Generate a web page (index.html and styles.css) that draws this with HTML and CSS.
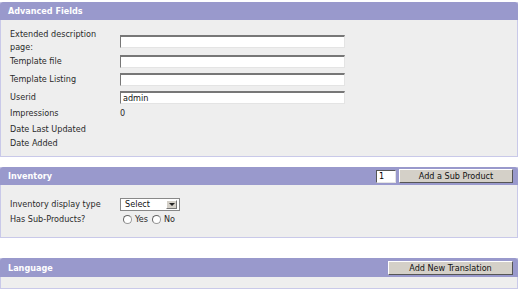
FILE: index.html
```html
<!DOCTYPE html>
<html lang="en">
<head>
    <meta charset="UTF-8">
    <title>Product Fields</title>
    <link rel="stylesheet" href="styles.css">
</head>
<body>
    <div class="panel adv">
        <div class="panel-head">Advanced Fields</div>
        <div class="panel-body">
            <div class="fields adv-rows">
                <div class="label">Extended description page:</div><div><input type="text" class="text"></div>
                <div class="label">Template file</div><div><input type="text" class="text"></div>
                <div class="label">Template Listing</div><div><input type="text" class="text"></div>
                <div class="label">Userid</div><div><input type="text" class="text" value="admin"></div>
                <div class="label">Impressions</div><div>0</div>
                <div class="label">Date Last Updated</div><div></div>
                <div class="label">Date Added</div><div></div>
            </div>
        </div>
    </div>

    <div class="panel inv">
        <div class="panel-head">
            <span>Inventory</span>
            <span class="head-tools">
                <input type="text" class="qty" value="1">
                <button class="btn sub">Add a Sub Product</button>
            </span>
        </div>
        <div class="panel-body">
            <div class="fields inv-rows">
                <div class="label">Inventory display type</div>
                <div><span class="select">Select<span class="arrow"></span></span></div>
                <div class="label">Has Sub-Products?</div>
                <div class="radios"><span class="radio"></span>Yes<span class="radio"></span>No</div>
            </div>
        </div>
    </div>

    <div class="panel lang">
        <div class="panel-head">
            <span>Language</span>
            <button class="btn trans">Add New Translation</button>
        </div>
        <div class="panel-body"></div>
    </div>
</body>
</html>
```

FILE: styles.css
```css
* { margin: 0; padding: 0; box-sizing: border-box; }
body { font-family: "DejaVu Sans Condensed", "DejaVu Sans", sans-serif; font-stretch: condensed; font-size: 9px; color: #2a2a2a; background: #fff; padding: 2px 2px 0 0; }
.panel { border: 1px solid #c9c9e9; border-top: none; background: #eeeeee; }
.panel-head { background: #9999cc; color: #fff; font-weight: bold; font-size: 9px; height: 18px; padding: 0 5px 0 8px; display: flex; align-items: center; justify-content: space-between; border-radius: 3px 3px 0 0; margin: 0 -1px; }
.adv { margin-bottom: 10px; }
.inv { margin-bottom: 20px; }
.adv .panel-body { padding: 8px 0 6px 9px; }
.inv .panel-body { padding: 12px 0 9px 9px; }
.lang .panel-head { height: 19px; }
.lang .panel-body { height: 11px; }
.fields { display: grid; grid-template-columns: 100px 240px; column-gap: 10px; align-items: center; line-height: 13px; }
.adv-rows { grid-template-rows: 26px 15px 20px 16px 17px 14px 14px; }
.inv-rows { grid-template-rows: 14px 17px; }
.text { display: block; width: 225px; height: 13px; border: 1px solid #e4e4e4; border-top: 2px solid #777; border-left: 1px solid #777; background: #fff; font: 9px "DejaVu Sans Condensed", "DejaVu Sans", sans-serif; color: #111; padding: 0 2px; }
.head-tools { display: flex; align-items: center; gap: 3px; }
.qty { width: 20px; height: 13px; border: 1px solid #e4e4e4; border-top: 1px solid #555; border-left: 1px solid #555; font: 9px "DejaVu Sans Condensed", "DejaVu Sans", sans-serif; padding: 0 2px; }
.btn { background: #d4d0c8; border: 1px solid; border-color: #fff #555 #555 #fff; font: 9px "DejaVu Sans Condensed", "DejaVu Sans", sans-serif; color: #111; height: 14px; }
.btn.sub { width: 114px; }
.btn.trans { width: 125px; }
.select { display: flex; align-items: center; justify-content: space-between; width: 60px; height: 13px; background: #fff; border: 1px solid #888; padding-left: 4px; color: #111; }
.arrow { width: 11px; height: 9px; margin-right: 2px; background: #d4d0c8; border: 1px solid; border-color: #fff #777 #777 #fff; position: relative; }
.arrow::after { content: ""; position: absolute; left: 2px; top: 2px; border: 3px solid transparent; border-top: 3px solid #222; border-bottom: none; }
.radios { display: flex; align-items: center; padding-left: 3px; gap: 3px; }
.radio { width: 9px; height: 9px; border-radius: 50%; border: 1px solid #999; border-top-color: #666; border-left-color: #666; background: #fff; }
.radios .radio:nth-of-type(2) { margin-left: 1px; }
```
